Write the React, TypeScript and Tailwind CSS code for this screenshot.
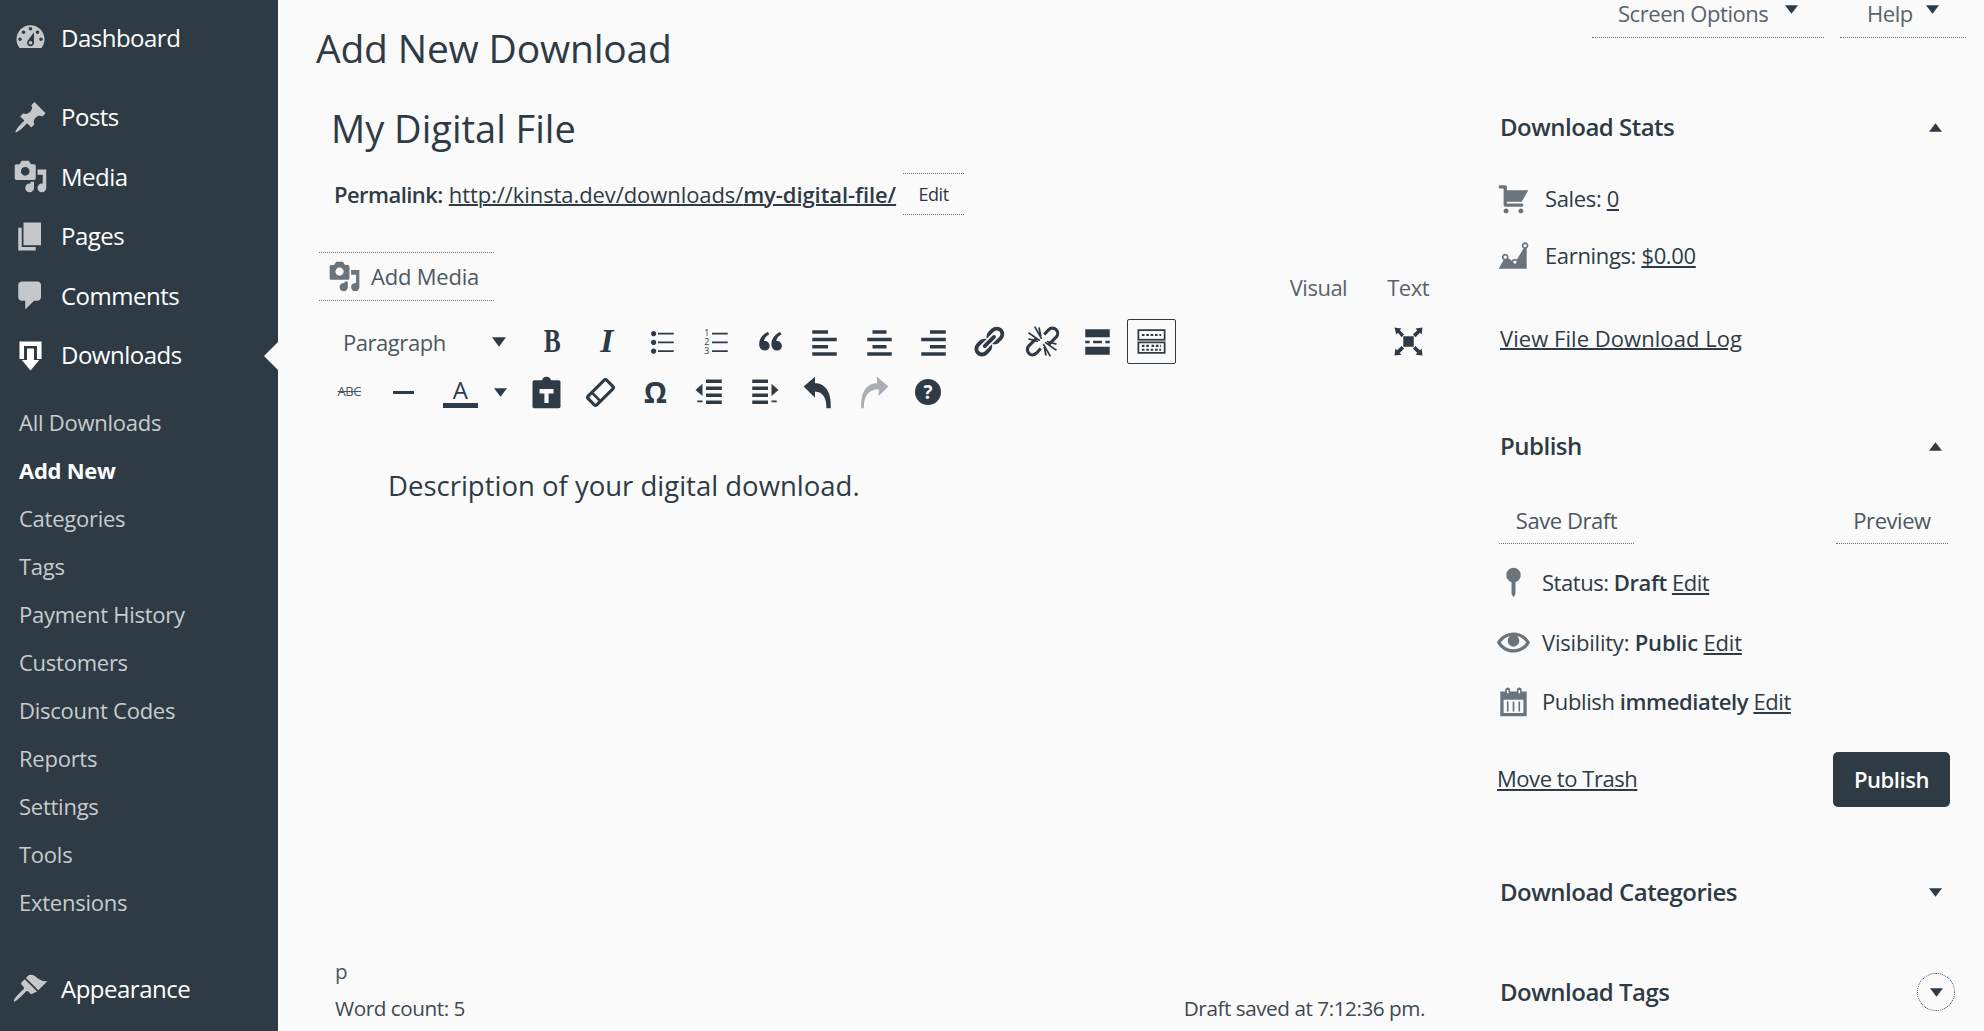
import React from 'react'

const ICON_PATHS: Record<string, string> = {
  dashboard: 'M3.76 16h12.48c1.1-1.37 1.76-3.11 1.76-5 0-4.42-3.58-8-8-8s-8 3.58-8 8c0 1.89.66 3.63 1.76 5zM10 4c.55 0 1 .45 1 1s-.45 1-1 1-1-.45-1-1 .45-1 1-1zM6 6c.55 0 1 .45 1 1s-.45 1-1 1-1-.45-1-1 .45-1 1-1zm8 0c.55 0 1 .45 1 1s-.45 1-1 1-1-.45-1-1 .45-1 1-1zm-5.37 5.55L12 7v6c0 1.1-.9 2-2 2s-2-.9-2-2c0-.57.24-1.08.63-1.45zM4 10c.55 0 1 .45 1 1s-.45 1-1 1-1-.45-1-1 .45-1 1-1zm12 0c.55 0 1 .45 1 1s-.45 1-1 1-1-.45-1-1 .45-1 1-1zm-5 3c0-.55-.45-1-1-1s-1 .45-1 1 .45 1 1 1 1-.45 1-1z',
  pin: 'M10.44 3.02l1.82-1.82 6.36 6.35-1.83 1.82c-1.05-.68-2.48-.57-3.41.36l-.75.75c-.92.93-1.04 2.35-.35 3.41l-1.83 1.82-2.41-2.41-2.8 2.79c-.42.42-3.38 2.71-3.8 2.29s1.86-3.39 2.28-3.81l2.79-2.79L4.1 9.36l1.83-1.82c1.05.69 2.48.57 3.4-.36l.75-.75c.93-.92 1.05-2.35.36-3.41z',
  media: 'M13 11V4c0-.55-.45-1-1-1h-1.67L9 1H5L3.67 3H2c-.55 0-1 .45-1 1v7c0 .55.45 1 1 1h10c.55 0 1-.45 1-1zM7 4.5c1.38 0 2.5 1.12 2.5 2.5S8.38 9.5 7 9.5 4.5 8.38 4.5 7 5.62 4.5 7 4.5zM14 6h5v10.5c0 1.38-1.12 2.5-2.5 2.5S14 17.88 14 16.5s1.12-2.5 2.5-2.5c.17 0 .34.02.5.05V9h-3V6zm-4 8.05V13h2v3.5c0 1.38-1.12 2.5-2.5 2.5S7 17.88 7 16.5 8.12 14 9.5 14c.17 0 .34.02.5.05z',
  pages: 'M6 15V2h10v13H6zm-1 1h8v2H3V5h2v11z',
  comments: 'M5 2h9c1.1 0 2 .9 2 2v7c0 1.1-.9 2-2 2h-2l-5 5v-5H5c-1.1 0-2-.9-2-2V4c0-1.1.9-2 2-2z',
  download: 'M3.700 2h12.600v10h-2.600V4.500H6.300V12H3.700zM8 6h4v6.500h3L10 18.500 5 12.500h3z',
  appearance: 'M14.48 11.06L7.41 3.99l1.5-1.5c.5-.56 2.3-.47 3.51.32 1.21.8 1.43 1.28 2.91 2.1 1.18.64 2.45 1.26 4.45.85zm-.71.71L6.7 4.7 4.93 6.47c-.39.39-.39 1.02 0 1.41l1.06 1.06c.39.39.39 1.03 0 1.42-.6.6-6.4 5.9-5.5 6.9s6.3-4.9 6.9-5.5c.39-.39 1.03-.39 1.42 0l1.06 1.06c.39.39 1.02.39 1.41 0z',
  ul: 'M5.5 7C4.67 7 4 6.33 4 5.5 4 4.68 4.67 4 5.5 4 6.32 4 7 4.68 7 5.5 7 6.33 6.32 7 5.5 7zM8 5h9v1H8V5zm-2.5 7c-.83 0-1.5-.67-1.5-1.5C4 9.68 4.67 9 5.5 9c.82 0 1.5.68 1.5 1.5 0 .83-.68 1.5-1.5 1.5zM8 10h9v1H8v-1zm-2.5 7c-.83 0-1.5-.67-1.5-1.5 0-.82.67-1.5 1.5-1.5.82 0 1.5.68 1.5 1.5 0 .83-.68 1.5-1.5 1.5zM8 15h9v1H8v-1z',
  quote: 'M9.5 12.6c0 1.5-1.1 2.6-2.7 2.6C4.9 15.200 3.500 13.600 3.500 11.400 3.500 8.300 5.700 5.600 8.500 4.500l.8 1.300C7.500 6.800 6.500 8 6.300 9.700c1.800-.2 3.200 1 3.200 2.900zm7 0c0 1.500-1.100 2.600-2.700 2.600-1.900 0-3.300-1.600-3.300-3.800 0-3.100 2.200-5.800 5-6.900l.8 1.300c-1.800 1-2.800 2.200-3 3.900 1.800-.2 3.200 1 3.200 2.900z',
  alignLeft: 'M3 3.500h9v2H3zM3 7.800h14v2H3zM3 12h9v2H3zM3 16.200h14v2H3z',
  alignCenter: 'M6 3.500h8v2H6zM3 7.800h14v2H3zM6 12h8v2H6zM3 16.200h14v2H3z',
  alignRight: 'M8 3.500h9v2H8zM3 7.800h14v2H3zM8 12h9v2H8zM3 16.200h14v2H3z',
  link: 'M17.74 2.76c1.68 1.69 1.68 4.41 0 6.1l-1.53 1.52c-1.12 1.12-2.7 1.47-4.14 1.09l2.62-2.61.76-.77.76-.76c.84-.84.84-2.2 0-3.04-.84-.85-2.2-.85-3.04 0l-.77.76-3.38 3.38c-.37-1.44-.02-3.02 1.1-4.14l1.52-1.53c1.69-1.68 4.42-1.68 6.1 0zM8.59 13.43l5.34-5.34c.42-.42.42-1.1 0-1.52-.44-.43-1.13-.39-1.53 0l-5.33 5.34c-.42.42-.42 1.1 0 1.52.44.43 1.13.39 1.52 0zm-.76 2.29l4.14-4.15c.38 1.44.03 3.02-1.09 4.14l-1.52 1.53c-1.69 1.68-4.41 1.68-6.1 0-1.68-1.68-1.68-4.42 0-6.1l1.53-1.52c1.12-1.12 2.7-1.47 4.14-1.1l-4.14 4.15c-.85.84-.85 2.2 0 3.05.84.84 2.2.84 3.04 0z',
  more: 'M3 3h14v4.500H3zM3 13h14v4.500H3zM3 9.500h2.500v1.500H3zM7.500 9.500h5v1.500h-5zM14.500 9.500H17v1.500h-2.500z',
  fullscreen: 'M7 7h6v6H7zM2 2l4 .5-1 1 2.500 2.500-1.500 1.500L4 5 3 6zM18 2l-.5 4-1-1L14 7.500 12.500 6 15 3.500l-1-1zM2 18l.5-4 1 1L6 12.500 7.500 14 5 16.500l1 1zM18 18l-4-.5 1-1-2.500-2.500 1.500-1.500L16.500 15l1-1z',
  paste: 'M7.500 3c0-1.100 1.100-2 2.500-2s2.500.9 2.500 2H17c.6 0 1 .4 1 1v14c0 .6-.4 1-1 1H3c-.6 0-1-.4-1-1V4c0-.6.4-1 1-1zM6 8v2.500h2.800V16h2.400v-5.500H14V8z',
  outdent: 'M8 2.500h9v2H8zM8 6.500h9v2H8zM8 10.500h9v2H8zM8 14.500h9v2H8zM2 8.500L6 5v7zM3 14.500h3v1H3z',
  indent: 'M3 2.500h9v2H3zM3 6.500h9v2H3zM3 10.500h9v2H3zM3 14.500h9v2H3zM18 8.500L14 5v7zM14 14.500h3v1h-3z',
  undo: 'M1.500 6.500L8 1v3.700c5.500 0 9.500 4.500 9 14.300h-2.500c.2-6-2-9.300-6.500-9.600V13z',
  redo: 'M18.500 6.500L12 1v3.700c-5.500 0-9.500 4.500-9 14.300h1.500c-.2-7 3-10.800 8.500-10.800V12z',
  cart: 'M6 13h9c.55 0 1 .45 1 1s-.45 1-1 1H5c-.55 0-1-.45-1-1V4H2c-.55 0-1-.45-1-1s.45-1 1-1h3c.55 0 1 .45 1 1v2h13l-4 7H6v1zm-.5 3c.83 0 1.5.67 1.500 1.500S6.330 19 5.500 19 4 18.330 4 17.500 4.670 16 5.500 16zm9 0c.83 0 1.500.67 1.500 1.500s-.67 1.500-1.500 1.500-1.500-.67-1.500-1.500.67-1.500 1.500-1.500z',
  chart: 'M18 18l.01-12.280c.59-.35.99-.99.99-1.720 0-1.100-.9-2-2-2s-2 .9-2 2c0 .8.47 1.480 1.140 1.800l-4.130 6.580c-.33-.24-.73-.38-1.160-.38-.84 0-1.550.51-1.850 1.240l-2.140-1.530c.09-.22.14-.46.14-.71 0-1.110-.89-2-2-2-1.100 0-2 .89-2 2 0 .73.4 1.360.98 1.710L1 18h17zM17 3c.55 0 1 .45 1 1s-.45 1-1 1-1-.45-1-1 .45-1 1-1zM5 10c.55 0 1 .45 1 1s-.45 1-1 1-1-.45-1-1 .45-1 1-1zm5.850 3c.55 0 1 .45 1 1s-.45 1-1 1-1-.45-1-1 .45-1 1-1z',
  status: 'M10 1a4.500 4.500 0 0 0-1.200 8.800V17l1.200 2 1.200-2V9.800A4.500 4.500 0 0 0 10 1z',
  eye: 'M19.700 9.400C17.700 6 14 3.900 10 3.900S2.300 6 .3 9.400L0 10l.3.6c2 3.400 5.700 5.500 9.700 5.500s7.700-2.100 9.700-5.500l.3-.6-.3-.6zM10 14.100c-3.100 0-6-1.600-7.700-4.100C3.600 8 5.700 6.600 8 6.100c-.9.6-1.500 1.700-1.500 2.900 0 1.900 1.600 3.500 3.500 3.500s3.500-1.600 3.500-3.500c0-1.200-.6-2.300-1.500-2.900 2.300.5 4.400 1.900 5.700 3.900-1.700 2.500-4.600 4.100-7.700 4.100z',
  calendar: 'M15 4h3v15H2V4h3V3c0-.41.15-.76.44-1.060.29-.29.65-.44 1.060-.44s.77.15 1.060.44c.29.3.44.65.44 1.060v1h4V3c0-.41.15-.76.44-1.060.29-.29.65-.44 1.060-.44s.77.15 1.060.44c.29.3.44.65.44 1.060v1zM6 5h1V3H6v2zm7 0h1V3h-1v2zM4 9v8h12V9H4zm2 1h1v6H6zm3.500 0h1v6h-1zm3.500 0h1v6h-1z',
}

const Icon = ({ name, className = 'w-[35px] h-[35px]' }: { name: string; className?: string }) => (
  <svg viewBox="0 0 20 20" fill="currentColor" className={className}>
    <path fillRule="evenodd" d={ICON_PATHS[name]} />
  </svg>
)

const Caret = ({ up = false, className = 'w-[13px] h-[9px]' }: { up?: boolean; className?: string }) => (
  <svg viewBox="0 0 12 8" fill="currentColor" className={className}>
    <polygon points={up ? '6,0 12,8 0,8' : '0,0 12,0 6,8'} />
  </svg>
)

const MenuItem = ({ icon, label, iconClass = 'text-[#c4c8cb]', className = '' }: { icon: string; label: string; iconClass?: string; className?: string }) => (
  <div className={`flex items-center h-[59.5px] pl-[13px] text-white text-[24px] tracking-[-0.5px] ${className}`}>
    <Icon name={icon} className={`w-[35px] h-[35px] shrink-0 ${iconClass}`} />
    <span className="ml-[13px]">{label}</span>
  </div>
)

const SUBMENU = ['All Downloads', 'Add New', 'Categories', 'Tags', 'Payment History', 'Customers', 'Discount Codes', 'Reports', 'Settings', 'Tools', 'Extensions']

const Tool = ({ children, className = '' }: { children: React.ReactNode; className?: string }) => (
  <div className={`w-[54.5px] h-[44px] shrink-0 flex items-center justify-center ${className}`}>{children}</div>
)

const Row = ({ icon, children, className = '', textClass = 'ml-[12px]' }: { icon: string; children: React.ReactNode; className?: string; textClass?: string }) => (
  <div className={`flex items-center ${className}`}>
    <Icon name={icon} className="w-[33px] h-[33px] shrink-0 text-[#6a747d]" />
    <span className={textClass}>{children}</span>
  </div>
)

const BoxHead = ({ title, up, className = '' }: { title: string; up: boolean; className?: string }) => (
  <div className={`flex items-center justify-between pl-[3px] pr-[8px] ${className}`}>
    <span className="text-[24px] font-semibold tracking-[-0.5px]">{title}</span>
    <Caret up={up} />
  </div>
)

export default function App() {
  return (
    <div
      className="flex h-[1031px] w-[1984px] overflow-hidden bg-[#fafafa] text-[#2e3b46] text-[22px] tracking-[-0.45px]"
      style={{ fontFamily: '"Open Sans", sans-serif' }}
    >
      {/* Admin menu */}
      <aside className="w-[278px] shrink-0 bg-[#2e3b45] flex flex-col pt-[8px] relative">
        <MenuItem icon="dashboard" label="Dashboard" />
        <MenuItem icon="pin" label="Posts" className="mt-[20px]" />
        <MenuItem icon="media" label="Media" />
        <MenuItem icon="pages" label="Pages" />
        <MenuItem icon="comments" label="Comments" />
        <div className="relative">
          <MenuItem icon="download" label="Downloads" iconClass="text-white" />
          <div className="absolute right-0 top-[16px] w-0 h-0 border-y-[14px] border-y-transparent border-r-[14px] border-r-[#fafafa]" />
        </div>
        <div className="mt-[13px] flex flex-col text-[#c8ccce] text-[22px] tracking-[-0.25px]">
          {SUBMENU.map((s) => (
            <div key={s} className={`h-[48px] flex items-center pl-[19px] ${s === 'Add New' ? 'font-bold text-white' : ''}`}>{s}</div>
          ))}
        </div>
        <MenuItem icon="appearance" label="Appearance" className="mt-[33px]" />
      </aside>

      {/* Content */}
      <main className="flex-1 pl-[38px] flex flex-col min-w-0">
        <header className="h-[96px] shrink-0 flex items-start justify-between">
          <h1 className="text-[39px] leading-[96px] font-normal tracking-[-0.2px]">Add New Download</h1>
          <div className="flex text-[#59636c] text-[22px] leading-[24px] mr-[18px] gap-[16px]">
            <div className="w-[232px] h-[38px] pb-[12px] border-b border-dotted border-[#69737c] flex items-center pl-[26px]">
              <span>Screen Options</span>
              <Caret className="w-[13px] h-[9px] ml-[17px] mb-[6px] text-[#2e3b46]" />
            </div>
            <div className="w-[126px] h-[38px] pb-[12px] border-b border-dotted border-[#69737c] flex items-center pl-[27px]">
              <span>Help</span>
              <Caret className="w-[13px] h-[9px] ml-[13px] mb-[6px] text-[#2e3b46]" />
            </div>
          </div>
        </header>

        <div className="flex-1 flex min-h-0">
          {/* Editor column */}
          <section className="w-[1124px] shrink-0 flex flex-col">
            <div className="h-[64px] pl-[15px] text-[38px] leading-[64px] tracking-normal">My Digital File</div>
            <div className="mt-[13px] h-[42px] pl-[18px] flex items-center">
              <span className="font-semibold tracking-[-0.55px]">Permalink:</span>
              <span className="ml-[6px] underline decoration-2 tracking-[-0.08px]">http://kinsta.dev/downloads/<span className="font-semibold">my-digital-file/</span></span>
              <span className="ml-[7px] w-[61px] h-[42px] flex items-center justify-center text-[18px] border-y border-dotted border-[#69737c]">Edit</span>
            </div>
            <div className="mt-[37px] flex items-start h-[62px]">
              <div className="ml-[3px] w-[175px] h-[49px] flex items-center pl-[9px] border-y border-dotted border-[#69737c] text-[#4d5862] tracking-[-0.2px]">
                <Icon name="media" className="w-[33px] h-[33px] text-[#6a747d]" />
                <span className="ml-[10px]">Add Media</span>
              </div>
              <div className="ml-auto mr-[11px] mt-[19px] flex gap-[40px] text-[#59636c] tracking-[-0.5px]">
                <span>Visual</span>
                <span>Text</span>
              </div>
            </div>

            {/* Toolbar */}
            <div className="ml-[6px] flex items-center h-[54px]">
              <div className="w-[203px] shrink-0 flex items-center justify-between pl-[21px] pr-[19px] text-[#4d5862] pt-[2px]">
                <span>Paragraph</span>
                <Caret className="w-[14px] h-[10px] text-[#2e3b46]" />
              </div>
              <Tool><span className="text-[34px] leading-none font-bold scale-x-75" style={{ fontFamily: '"Liberation Serif", serif' }}>B</span></Tool>
              <Tool><span className="text-[34px] leading-none font-bold italic" style={{ fontFamily: '"Liberation Serif", serif' }}>I</span></Tool>
              <Tool><Icon name="ul" /></Tool>
              <Tool>
                <svg viewBox="0 0 20 20" fill="currentColor" className="w-[35px] h-[35px]">
                  <path d="M8 5h9v1H8zM8 10h9v1H8zM8 15h9v1H8z" />
                  <text x="3.500" y="7" fontSize="5">1</text>
                  <text x="3.500" y="12" fontSize="5">2</text>
                  <text x="3.500" y="17" fontSize="5">3</text>
                </svg>
              </Tool>
              <Tool><Icon name="quote" /></Tool>
              <Tool><Icon name="alignLeft" /></Tool>
              <Tool><Icon name="alignCenter" /></Tool>
              <Tool><Icon name="alignRight" /></Tool>
              <Tool><Icon name="link" /></Tool>
              <Tool>
                <svg viewBox="0 0 20 20" fill="none" stroke="currentColor" className="w-[35px] h-[35px]">
                  <path d="M11 6l2.500-2.700a3 3 0 0 1 4.300 4.200L13.500 11.800" strokeWidth="1.800" />
                  <path d="M9 14l-2.500 2.700a3 3 0 0 1-4.300-4.200L6.500 8.200" strokeWidth="1.800" />
                  <path d="M9.500 8.500L5.500 1.500M8.500 9.500L2 5M9 7L8 2M7.500 10L2 8.500M10.500 11.500L14.500 18.500M11.500 10.500L18 15M11 13l1 5M12.500 10l5.500 1.500" strokeWidth="1" />
                </svg>
              </Tool>
              <Tool><Icon name="more" /></Tool>
              <div className="ml-[2px] w-[49px] h-[45px] flex items-center justify-center border border-[#2e3b46] rounded-[2px]">
                <svg viewBox="0 0 20 20" fill="none" stroke="currentColor" className="w-[35px] h-[35px]">
                  <rect x="2.500" y="3.500" width="15" height="5.500" strokeWidth="1" />
                  <rect x="2.500" y="10.500" width="15" height="6" strokeWidth="1" />
                  <path d="M4.500 6.300h11M4.500 12.500h4M10 12.500h5.500M4.500 14.700h11" strokeWidth="1.200" strokeDasharray="1.500 1" />
                </svg>
              </div>
              <Tool className="ml-auto mr-[4px]"><Icon name="fullscreen" /></Tool>
            </div>
            <div className="ml-[6px] flex items-center h-[44px] mt-[2px]">
              <Tool><span className="text-[13px] line-through text-[#4d5862]">ABC</span></Tool>
              <Tool><div className="w-[21px] h-[3px] bg-[#2e3b46]" /></Tool>
              <div className="w-[58px] h-[44px] shrink-0 flex flex-col items-center justify-center">
                <span className="text-[24px] leading-[26px]">A</span>
                <div className="w-[35px] h-[5px] bg-[#2e3b46]" />
              </div>
              <div className="w-[22px] flex justify-center shrink-0"><Caret /></div>
              <Tool className="ml-[8px]"><Icon name="paste" /></Tool>
              <Tool>
                <svg viewBox="0 0 20 20" fill="none" stroke="currentColor" className="w-[35px] h-[35px]">
                  <rect x="2.500" y="6.500" width="15" height="7" rx="1.200" strokeWidth="1.800" transform="rotate(-45 10 10)" />
                  <path d="M5.500 10.500l4 4" strokeWidth="1.600" />
                </svg>
              </Tool>
              <Tool><span className="text-[29px] font-bold">Ω</span></Tool>
              <Tool><Icon name="outdent" /></Tool>
              <Tool><Icon name="indent" /></Tool>
              <Tool><Icon name="undo" /></Tool>
              <Tool><Icon name="redo" className="w-[35px] h-[35px] text-[#a9afb4]" /></Tool>
              <Tool>
                <div className="w-[26px] h-[26px] rounded-full bg-[#2e3b46] text-[#fafafa] flex items-center justify-center text-[19px] font-bold">?</div>
              </Tool>
            </div>

            <p className="mt-[51px] ml-[72px] text-[27.5px] tracking-normal">Description of your digital download.</p>

            <div className="mt-auto pb-[4px] pl-[19px] flex flex-col text-[20.7px]">
              <span className="leading-[37px] text-[#4d5862]">p</span>
              <div className="flex justify-between leading-[37px] pr-[15px] text-[#3d4954]">
                <span>Word count: 5</span>
                <span>Draft saved at 7:12:36 pm.</span>
              </div>
            </div>
          </section>

          {/* Meta boxes */}
          <section className="ml-[57px] w-[453px] shrink-0 flex flex-col">
            <BoxHead title="Download Stats" up className="h-[62px]" />
            <Row icon="cart" textClass="ml-[15px] tracking-[-0.35px]" className="mt-[23px] h-[34px]">Sales: <span className="underline">0</span></Row>
            <Row icon="chart" textClass="ml-[15px] tracking-[-0.35px]" className="mt-[23px] h-[34px]">Earnings: <span className="underline">$0.00</span></Row>
            <div className="mt-[50px] pl-[3px] underline decoration-2 leading-[32px] tracking-[0.05px]">View File Download Log</div>

            <BoxHead title="Publish" up className="mt-[74px] h-[36px]" />
            <div className="mt-[33px] flex justify-between pl-[2px] pr-[2px]">
              <div className="w-[135px] h-[47px] flex items-center justify-center border-b border-dotted border-[#69737c] text-[#4d5862]">Save Draft</div>
              <div className="w-[112px] h-[47px] flex items-center justify-center border-b border-dotted border-[#69737c] text-[#4d5862]">Preview</div>
            </div>
            <Row icon="status" className="mt-[21px] h-[34px]">Status: <b className="font-semibold">Draft</b> <span className="underline">Edit</span></Row>
            <Row icon="eye" textClass="ml-[12px] tracking-[-0.2px]" className="mt-[26px] h-[34px]">Visibility: <b className="font-semibold">Public</b> <span className="underline">Edit</span></Row>
            <Row icon="calendar" textClass="ml-[12px] tracking-[-0.4px]" className="mt-[25px] h-[34px]">Publish <b className="font-semibold">immediately</b> <span className="underline">Edit</span></Row>
            <div className="mt-[34px] flex items-center justify-between pr-0">
              <span className="underline pb-[3px]">Move to Trash</span>
              <div className="w-[117px] h-[55px] pb-[1px] rounded-[5px] bg-[#2e3b45] text-white font-semibold flex items-center justify-center">Publish</div>
            </div>

            <BoxHead title="Download Categories" up={false} className="mt-[67px] h-[36px]" />
            <div className="mt-[63px] h-[38px] flex items-center justify-between pl-[3px] pr-0">
              <span className="text-[24px] font-semibold tracking-[-0.5px]">Download Tags</span>
              <div className="w-[38px] h-[38px] mr-[-5px] rounded-full border border-dotted border-[#2e3b46] flex items-center justify-center">
                <Caret />
              </div>
            </div>
          </section>
        </div>
      </main>
    </div>
  )
}
